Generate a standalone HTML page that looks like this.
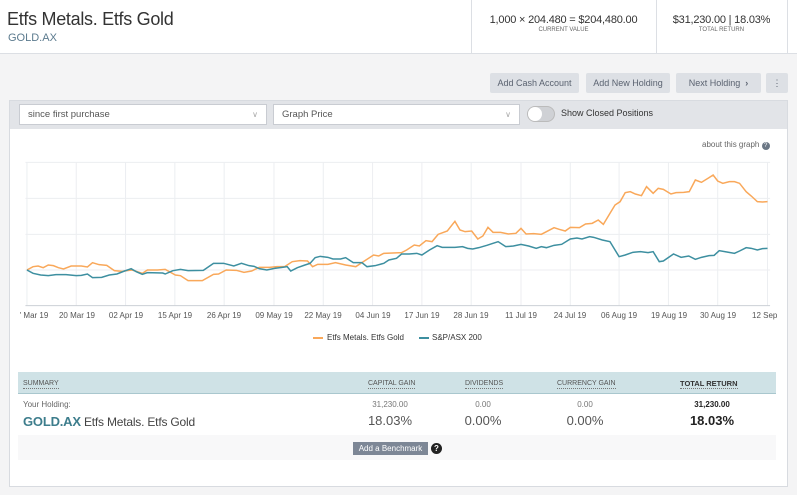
<!DOCTYPE html><html><head><meta charset="utf-8"><style>
*{box-sizing:border-box;margin:0;padding:0}
body{width:797px;height:495px;background:#f4f4f5;font-family:"Liberation Sans",sans-serif;position:relative;overflow:hidden;color:#333}
.a{position:absolute}
.hdr{left:0;top:0;width:797px;height:54px;background:#fff;border-bottom:1px solid #dcdfe4}
.btn{position:absolute;top:73px;height:20px;background:#dde0e5;border-radius:2px;font-size:9px;color:#5a6270;text-align:center;line-height:20px}
.sel{position:absolute;top:104px;height:21px;background:#fff;border:1px solid #c9ccd2;font-size:9.5px;color:#555;line-height:19px;padding-left:8px}
.sel span{position:absolute;right:8px;color:#aaa;font-size:8px}
.th{position:absolute;top:379px;font-size:7px;color:#555;border-bottom:1px dotted #777;line-height:9px}
.xl{position:absolute;top:311px;font-size:8px;color:#555;transform:translateX(-50%);white-space:nowrap}
</style></head><body>
<div class="a hdr"></div>
<div class="a" style="left:7px;top:9px;font-size:18px;color:#333;letter-spacing:-0.3px">Etfs Metals. Etfs Gold</div>
<div class="a" style="left:8px;top:32px;font-size:11px;color:#5b7a8e">GOLD.AX</div>
<div class="a" style="left:471px;top:0;width:1px;height:54px;background:#dcdfe4"></div>
<div class="a" style="left:656px;top:0;width:1px;height:54px;background:#dcdfe4"></div>
<div class="a" style="left:787px;top:0;width:1px;height:54px;background:#dcdfe4"></div>
<div class="a" style="left:471px;top:14px;width:185px;text-align:center;font-size:11px;color:#333;letter-spacing:-0.2px">1,000 × 204.480 = $204,480.00</div>
<div class="a" style="left:471px;top:27px;width:185px;text-align:center;font-size:6px;color:#666">CURRENT VALUE</div>
<div class="a" style="left:656px;top:14px;width:131px;text-align:center;font-size:11px;color:#333;letter-spacing:-0.2px">$31,230.00 | 18.03%</div>
<div class="a" style="left:656px;top:27px;width:131px;text-align:center;font-size:6px;color:#666">TOTAL RETURN</div>
<div class="btn" style="left:490px;width:89px">Add Cash Account</div>
<div class="btn" style="left:586px;width:84px">Add New Holding</div>
<div class="btn" style="left:676px;width:85px">Next Holding &nbsp;<b>›</b></div>
<div class="btn" style="left:766px;width:22px">⋮</div>
<div class="a" style="left:9px;top:100px;width:779px;height:387px;background:#fff;border:1px solid #d8dbe0"></div>
<div class="a" style="left:10px;top:101px;width:777px;height:28px;background:#e2e4e8"></div>
<div class="sel" style="left:19px;width:248px">since first purchase<span>∨</span></div>
<div class="sel" style="left:273px;width:247px">Graph Price<span>∨</span></div>
<div class="a" style="left:527px;top:106px;width:28px;height:16px;border-radius:8px;background:#cfd1d5;border:1px solid #bbb"></div>
<div class="a" style="left:528px;top:107px;width:14px;height:14px;border-radius:7px;background:#fff"></div>
<div class="a" style="left:561px;top:108px;font-size:9px;color:#333">Show Closed Positions</div>
<div class="a" style="left:702px;top:140px;font-size:8px;color:#666">about this graph <span style="display:inline-block;width:8px;height:8px;border-radius:4px;background:#6b7785;color:#fff;font-size:6px;text-align:center;line-height:8px">?</span></div>
<svg class="a" style="left:0;top:130px" width="797" height="220" viewBox="0 0 1568 660" preserveAspectRatio="none">
<g stroke="#eceef1" stroke-width="1">
<line x1="50" x2="1515" y1="97" y2="97" vector-effect="non-scaling-stroke"/><line x1="50" x2="1515" y1="205" y2="205" vector-effect="non-scaling-stroke"/><line x1="50" x2="1515" y1="313" y2="313" vector-effect="non-scaling-stroke"/><line x1="50" x2="1515" y1="420" y2="420" vector-effect="non-scaling-stroke"/>
<line x1="53" x2="53" y1="97" y2="527" vector-effect="non-scaling-stroke"/><line x1="150" x2="150" y1="97" y2="527" vector-effect="non-scaling-stroke"/><line x1="247" x2="247" y1="97" y2="527" vector-effect="non-scaling-stroke"/><line x1="344" x2="344" y1="97" y2="527" vector-effect="non-scaling-stroke"/><line x1="441" x2="441" y1="97" y2="527" vector-effect="non-scaling-stroke"/><line x1="539" x2="539" y1="97" y2="527" vector-effect="non-scaling-stroke"/><line x1="636" x2="636" y1="97" y2="527" vector-effect="non-scaling-stroke"/><line x1="733" x2="733" y1="97" y2="527" vector-effect="non-scaling-stroke"/><line x1="830" x2="830" y1="97" y2="527" vector-effect="non-scaling-stroke"/><line x1="927" x2="927" y1="97" y2="527" vector-effect="non-scaling-stroke"/><line x1="1025" x2="1025" y1="97" y2="527" vector-effect="non-scaling-stroke"/><line x1="1122" x2="1122" y1="97" y2="527" vector-effect="non-scaling-stroke"/><line x1="1218" x2="1218" y1="97" y2="527" vector-effect="non-scaling-stroke"/><line x1="1315" x2="1315" y1="97" y2="527" vector-effect="non-scaling-stroke"/><line x1="1412" x2="1412" y1="97" y2="527" vector-effect="non-scaling-stroke"/><line x1="1510" x2="1510" y1="97" y2="527" vector-effect="non-scaling-stroke"/>
</g>
<line x1="50" x2="1515" y1="527" y2="527" stroke="#ccd0d6" vector-effect="non-scaling-stroke"/>
<polyline fill="none" stroke="#f9a85a" stroke-width="1.5" vector-effect="non-scaling-stroke" points="53,420 65,410 75,408 85,413 95,405 105,407 115,413 125,417 140,408 160,408 172,411 182,398 195,404 210,406 225,422 240,424 260,420 280,430 290,420 310,420 325,418 345,435 355,437 370,452 398,452 420,433 430,432 445,420 465,421 480,427 495,423 510,412 530,412 545,410 560,410 575,395 590,392 605,393 615,410 625,403 645,403 660,398 680,405 700,410 715,395 735,375 745,378 755,370 790,368 800,360 815,345 825,348 838,332 850,335 862,313 880,303 895,274 905,300 915,305 928,303 940,327 950,318 960,292 970,307 985,307 1000,312 1015,310 1025,295 1035,312 1050,311 1065,313 1075,305 1090,293 1100,298 1112,303 1122,292 1140,293 1152,282 1165,280 1177,270 1187,283 1200,250 1210,225 1220,215 1230,188 1240,185 1250,192 1262,197 1272,170 1285,190 1295,175 1305,178 1320,192 1330,188 1345,187 1356,185 1368,150 1380,157 1395,143 1403,135 1412,153 1422,160 1435,155 1445,155 1455,160 1468,185 1478,198 1490,215 1500,216 1510,215"/>
<polyline fill="none" stroke="#3d8fa0" stroke-width="1.5" vector-effect="non-scaling-stroke" points="53,420 65,430 80,435 95,437 110,434 130,434 150,437 160,436 172,432 182,443 200,442 215,435 230,432 245,423 258,416 268,425 280,433 290,428 320,429 325,432 340,422 355,418 370,422 400,421 420,400 440,400 460,408 475,400 490,407 500,409 510,416 525,420 540,415 555,412 565,410 572,423 585,413 600,405 610,400 620,383 630,379 645,382 655,387 670,387 680,383 695,398 712,398 722,410 738,407 755,400 765,390 780,385 790,372 805,372 820,370 830,375 845,360 860,347 870,352 895,352 910,350 920,355 930,357 942,353 958,346 970,340 980,335 995,350 1010,348 1025,343 1040,348 1055,355 1065,350 1075,353 1090,346 1105,343 1122,327 1135,324 1145,327 1160,320 1168,322 1185,330 1200,335 1218,380 1230,375 1245,367 1260,365 1275,368 1285,365 1297,395 1305,393 1325,372 1340,382 1355,378 1368,388 1380,382 1395,377 1405,376 1415,362 1430,366 1445,370 1455,363 1468,353 1478,355 1490,360 1500,356 1510,355"/>
</svg>
<div class="xl" style="left:34px">' Mar 19</div><div class="xl" style="left:77px">20 Mar 19</div><div class="xl" style="left:126px">02 Apr 19</div><div class="xl" style="left:175px">15 Apr 19</div><div class="xl" style="left:224px">26 Apr 19</div><div class="xl" style="left:274px">09 May 19</div><div class="xl" style="left:323px">22 May 19</div><div class="xl" style="left:373px">04 Jun 19</div><div class="xl" style="left:422px">17 Jun 19</div><div class="xl" style="left:471px">28 Jun 19</div><div class="xl" style="left:521px">11 Jul 19</div><div class="xl" style="left:570px">24 Jul 19</div><div class="xl" style="left:619px">06 Aug 19</div><div class="xl" style="left:669px">19 Aug 19</div><div class="xl" style="left:718px">30 Aug 19</div><div class="a" style="left:752px;top:311px;font-size:8px;color:#555">12 Sep</div>
<div class="a" style="left:313px;top:337px;width:10px;height:2px;background:#f9a85a"></div>
<div class="a" style="left:327px;top:333px;font-size:8px;color:#333">Etfs Metals. Etfs Gold</div>
<div class="a" style="left:419px;top:337px;width:10px;height:2px;background:#3d8fa0"></div>
<div class="a" style="left:432px;top:333px;font-size:8px;color:#333">S&amp;P/ASX 200</div>
<div class="a" style="left:18px;top:372px;width:758px;height:22px;background:#cfe2e6;border-bottom:1px solid #a9c7ce"></div>
<div class="th" style="left:23px">SUMMARY</div>
<div class="th" style="left:368px">CAPITAL GAIN</div>
<div class="th" style="left:465px">DIVIDENDS</div>
<div class="th" style="left:557px">CURRENCY GAIN</div>
<div class="th" style="left:680px;font-weight:bold;color:#333;font-size:7.5px">TOTAL RETURN</div>
<div class="a" style="left:23px;top:400px;font-size:8px;color:#666">Your Holding:</div>
<div class="a" style="left:23px;top:414px;font-size:12px;color:#444;letter-spacing:-0.2px"><b style="color:#3d7d8c;font-size:13px">GOLD.AX</b> Etfs Metals. Etfs Gold</div>
<div class="a" style="left:350px;top:400px;width:80px;text-align:center;font-size:8px;color:#777">31,230.00</div>
<div class="a" style="left:350px;top:413px;width:80px;text-align:center;font-size:13px;color:#555">18.03%</div>
<div class="a" style="left:443px;top:400px;width:80px;text-align:center;font-size:8px;color:#777">0.00</div>
<div class="a" style="left:443px;top:413px;width:80px;text-align:center;font-size:13px;color:#555">0.00%</div>
<div class="a" style="left:545px;top:400px;width:80px;text-align:center;font-size:8px;color:#777">0.00</div>
<div class="a" style="left:545px;top:413px;width:80px;text-align:center;font-size:13px;color:#555">0.00%</div>
<div class="a" style="left:672px;top:400px;width:80px;text-align:center;font-size:8px;color:#222;font-weight:bold">31,230.00</div>
<div class="a" style="left:672px;top:413px;width:80px;text-align:center;font-size:13px;color:#222;font-weight:bold">18.03%</div>
<div class="a" style="left:18px;top:435px;width:758px;height:25px;background:#f8f8f9"></div>
<div class="a" style="left:353px;top:442px;width:75px;height:13px;background:#7d8796;color:#fff;font-size:8px;text-align:center;line-height:13px">Add a Benchmark</div>
<div class="a" style="left:431px;top:443px;width:11px;height:11px;border-radius:6px;background:#222;color:#fff;font-size:8px;font-weight:bold;text-align:center;line-height:11px">?</div>
</body></html>
